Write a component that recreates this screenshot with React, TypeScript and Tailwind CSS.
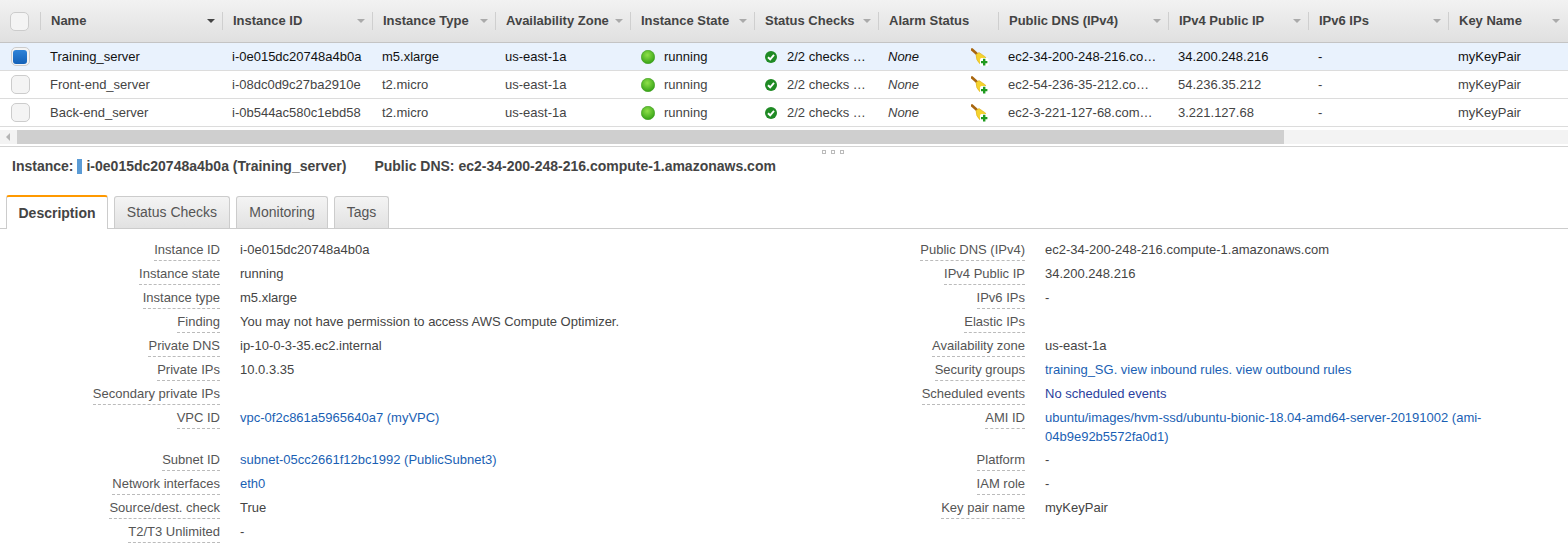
import type { ReactNode } from 'react'

const FONT = "font-['Liberation_Sans',Arial,sans-serif]"

const COLUMNS = [
  { label: 'Name', width: 'w-[182px]', dark: true },
  { label: 'Instance ID', width: 'w-[150px]' },
  { label: 'Instance Type', width: 'w-[123px]' },
  { label: 'Availability Zone', width: 'w-[135px]' },
  { label: 'Instance State', width: 'w-[124px]' },
  { label: 'Status Checks', width: 'w-[124px]' },
  { label: 'Alarm Status', width: 'w-[120px]', noSort: true },
  { label: 'Public DNS (IPv4)', width: 'w-[170px]' },
  { label: 'IPv4 Public IP', width: 'w-[140px]' },
  { label: 'IPv6 IPs', width: 'w-[140px]' },
  { label: 'Key Name', width: 'w-[119px]' },
]

const ROWS = [
  {
    name: 'Training_server',
    id: 'i-0e015dc20748a4b0a',
    type: 'm5.xlarge',
    dns: 'ec2-34-200-248-216.co…',
    ip: '34.200.248.216',
    selected: true,
  },
  {
    name: 'Front-end_server',
    id: 'i-08dc0d9c27ba2910e',
    type: 't2.micro',
    dns: 'ec2-54-236-35-212.co…',
    ip: '54.236.35.212',
  },
  {
    name: 'Back-end_server',
    id: 'i-0b544ac580c1ebd58',
    type: 't2.micro',
    dns: 'ec2-3-221-127-68.com…',
    ip: '3.221.127.68',
  },
]

function Caret({ dark }: { dark?: boolean }) {
  return (
    <span
      className={`h-0 w-0 border-x-[4px] border-t-[4px] border-x-transparent ${
        dark ? 'border-t-[#444]' : 'border-t-[#aaa]'
      }`}
    />
  )
}

function Checkbox({ checked }: { checked?: boolean }) {
  return (
    <span className="flex size-[19px] items-center justify-center rounded-[5px] border border-[#ccc] bg-[#f4f4f4]">
      {checked && (
        <span className="size-[14px] rounded-[3px] bg-gradient-to-b from-[#2f84d8] to-[#1261b8]" />
      )}
    </span>
  )
}

function RunningDot() {
  return (
    <svg viewBox="0 0 14 14" className="size-[14px] shrink-0" aria-hidden>
      <defs>
        <radialGradient id="run" cx="45%" cy="35%" r="70%">
          <stop offset="0%" stopColor="#8fe04a" />
          <stop offset="100%" stopColor="#2f9e12" />
        </radialGradient>
      </defs>
      <circle cx="7" cy="7" r="6.7" fill="url(#run)" stroke="#3a9a1c" strokeWidth="0.6" />
    </svg>
  )
}

function CheckBadge() {
  return (
    <svg viewBox="0 0 12 12" className="size-3 shrink-0" aria-hidden>
      <circle cx="6" cy="6" r="6" fill="#1f8a24" />
      <path d="M3 6.2 5.2 8.3 9 3.9" fill="none" stroke="#fff" strokeWidth="1.9" />
    </svg>
  )
}

function AlarmIcon() {
  return (
    <svg viewBox="0 0 18 18" className="size-[18px] shrink-0" aria-hidden>
      <path d="M1 1.5 6.5 6.5" stroke="#a8660f" strokeWidth="2.6" strokeLinecap="round" />
      <path d="M5 6.5 8 4.5 14.5 9 15 13 9.5 16.5Q4.5 12 5 6.5Z" fill="#f5d32f" stroke="#dcae1c" strokeWidth="0.6" />
      <rect x="9" y="10" width="8.5" height="8" rx="1.5" fill="#fff" />
      <path d="M13.2 10.8v6.6M10 14.1h6.4" stroke="#1f9a1f" strokeWidth="2.4" />
    </svg>
  )
}

function Cell({ width, children, className = '' }: { width: string; children?: ReactNode; className?: string }) {
  return (
    <div className={`flex h-full shrink-0 items-center overflow-hidden whitespace-nowrap pl-[10px] ${width} ${className}`}>
      {children}
    </div>
  )
}

function HeaderRow() {
  return (
    <div className="flex h-[43px] border-b border-[#c4c4c4] bg-gradient-to-b from-[#f2f2f2] to-[#e0e0e0]">
      <div className="flex w-[40px] shrink-0 items-center justify-center pr-[1px]">
        <Checkbox />
      </div>
      {COLUMNS.map((col) => (
        <div key={col.label} className={`flex h-full shrink-0 items-center ${col.width}`}>
          <span className="h-[18px] w-px shrink-0 bg-[#cfcfcf]" />
          <span className="flex-1 whitespace-nowrap pl-[10px] font-bold text-[#444]">{col.label}</span>
          {!col.noSort && <span className="mr-[7px] flex"><Caret dark={col.dark} /></span>}
        </div>
      ))}
    </div>
  )
}

function TableRow({ row }: { row: (typeof ROWS)[number] }) {
  return (
    <div
      className={`flex h-[28px] border-b border-[#dcdcdc] ${
        row.selected ? 'bg-[#e9f2fd] text-[#111]' : 'bg-white text-[#444]'
      }`}
    >
      <div className="flex w-[40px] shrink-0 items-center justify-center">
        <Checkbox checked={row.selected} />
      </div>
      <Cell width="w-[182px]">{row.name}</Cell>
      <Cell width="w-[150px]">{row.id}</Cell>
      <Cell width="w-[123px]">{row.type}</Cell>
      <Cell width="w-[135px]">us-east-1a</Cell>
      <Cell width="w-[124px]" className="gap-[9px] pl-[11px]">
        <RunningDot />
        running
      </Cell>
      <Cell width="w-[124px]" className="gap-[10px] pl-[11px]">
        <CheckBadge />
        2/2 checks …
      </Cell>
      <Cell width="w-[120px]" className="justify-between pr-[9px] italic">
        None
        <AlarmIcon />
      </Cell>
      <Cell width="w-[170px]">{row.dns}</Cell>
      <Cell width="w-[140px]">{row.ip}</Cell>
      <Cell width="w-[140px]">-</Cell>
      <Cell width="w-[119px]">myKeyPair</Cell>
    </div>
  )
}

function Scrollbar() {
  return (
    <div className="flex h-[20px] items-center border-b border-[#d4d4d4] bg-white">
      <div className="flex h-[14px] flex-1 items-center bg-[#f3f3f3]">
        <span className="ml-[6px] h-0 w-0 border-y-[4px] border-r-[4px] border-y-transparent border-r-[#b5b5b5]" />
        <span className="ml-[7px] h-full w-[1267px] bg-[#cfcfcf]" />
      </div>
    </div>
  )
}

const TABS = [
  { label: 'Description', width: 'w-[102px]', active: true },
  { label: 'Status Checks', width: 'w-[116px]' },
  { label: 'Monitoring', width: 'w-[92px]' },
  { label: 'Tags', width: 'w-[55px]' },
]

function Tabs() {
  return (
    <div className="mt-[9px] flex h-[34px] items-end gap-[6px] border-b border-[#ccc] pl-[6px] text-[14px]">
      {TABS.map((tab) =>
        tab.active ? (
          <div
            key={tab.label}
            className={`-mb-px flex h-[34px] items-center justify-center rounded-t-[3px] border-x border-t-2 border-x-[#ccc] border-t-[#f90] bg-white font-bold text-[#444] ${tab.width}`}
          >
            {tab.label}
          </div>
        ) : (
          <div
            key={tab.label}
            className={`flex h-[32px] items-center justify-center rounded-t-[3px] border-x border-t border-[#ccc] bg-gradient-to-b from-[#f4f4f4] to-[#e2e2e2] text-[#555] ${tab.width}`}
          >
            {tab.label}
          </div>
        ),
      )}
    </div>
  )
}

const LINK = 'text-[#1a5fb4]'

const LEFT: [string, ReactNode, number?][] = [
  ['Instance ID', 'i-0e015dc20748a4b0a'],
  ['Instance state', 'running'],
  ['Instance type', 'm5.xlarge'],
  ['Finding', 'You may not have permission to access AWS Compute Optimizer.'],
  ['Private DNS', 'ip-10-0-3-35.ec2.internal'],
  ['Private IPs', '10.0.3.35'],
  ['Secondary private IPs', ''],
  ['VPC ID', <span className={LINK}>vpc-0f2c861a5965640a7 (myVPC)</span>, 42],
  ['Subnet ID', <span className={LINK}>subnet-05cc2661f12bc1992 (PublicSubnet3)</span>],
  ['Network interfaces', <span className={LINK}>eth0</span>],
  ['Source/dest. check', 'True'],
  ['T2/T3 Unlimited', '-'],
]

const RIGHT: [string, ReactNode, number?][] = [
  ['Public DNS (IPv4)', 'ec2-34-200-248-216.compute-1.amazonaws.com'],
  ['IPv4 Public IP', '34.200.248.216'],
  ['IPv6 IPs', '-'],
  ['Elastic IPs', ''],
  ['Availability zone', 'us-east-1a'],
  [
    'Security groups',
    <span className={LINK}>training_SG. view inbound rules. view outbound rules</span>,
  ],
  ['Scheduled events', <span className="text-[#2a3f9e]">No scheduled events</span>],
  [
    'AMI ID',
    <span className={LINK}>
      ubuntu/images/hvm-ssd/ubuntu-bionic-18.04-amd64-server-20191002 (ami-04b9e92b5572fa0d1)
    </span>,
    42,
  ],
  ['Platform', '-'],
  ['IAM role', '-'],
  ['Key pair name', 'myKeyPair'],
]

function DetailColumn({
  rows,
  labelWidth,
  valueWidth,
}: {
  rows: [string, ReactNode, number?][]
  labelWidth: string
  valueWidth: string
}) {
  return (
    <div className="flex flex-col">
      {rows.map(([label, value, height]) => (
        <div key={label} className={`flex ${height ? 'h-[42px]' : 'h-[24px]'}`}>
          <div className={`shrink-0 text-right ${labelWidth}`}>
            <span className="inline-block border-b border-dashed border-[#bbb] pb-[2px] leading-[17px] text-[#555]">
              {label}
            </span>
          </div>
          <div className={`ml-[20px] leading-[19px] text-[#444] ${valueWidth}`}>{value}</div>
        </div>
      ))}
    </div>
  )
}

export default function App() {
  return (
    <div className={`h-[548px] w-[1568px] overflow-hidden bg-white text-[13px] ${FONT}`}>
      <HeaderRow />
      {ROWS.map((row) => (
        <TableRow key={row.id} row={row} />
      ))}
      <Scrollbar />
      <div className="relative flex h-[39px] items-center pl-[12px] text-[14px] font-bold text-[#444]">
        <span className="absolute left-[822px] top-[3px] flex gap-[5px]">
          <span className="size-[4px] border border-[#bbb]" />
          <span className="size-[4px] border border-[#bbb]" />
          <span className="size-[4px] border border-[#bbb]" />
        </span>
        Instance:
        <span className="mx-[4px] h-[15px] w-[5px] bg-[#5b9bd5]" />
        i-0e015dc20748a4b0a (Training_server)
        <span className="ml-[28px]">Public DNS: ec2-34-200-248-216.compute-1.amazonaws.com</span>
      </div>
      <Tabs />
      <div className="flex pt-[11px]">
        <DetailColumn rows={LEFT} labelWidth="w-[220px]" valueWidth="w-[565px]" />
        <DetailColumn rows={RIGHT} labelWidth="w-[220px]" valueWidth="w-[450px]" />
      </div>
    </div>
  )
}
